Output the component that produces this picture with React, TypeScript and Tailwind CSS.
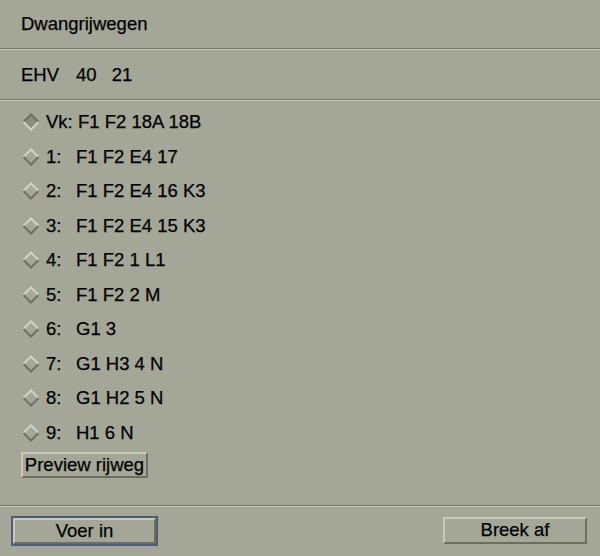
import React from "react";

// Motif-achtige dialoog: keuze van de dwangrijweg.

const ROUTES: Array<{ label: string; route: string }> = [
  { label: "Vk:", route: "F1 F2 18A 18B" },
  { label: "1:", route: "F1 F2 E4 17" },
  { label: "2:", route: "F1 F2 E4 16 K3" },
  { label: "3:", route: "F1 F2 E4 15 K3" },
  { label: "4:", route: "F1 F2 1 L1" },
  { label: "5:", route: "F1 F2 2 M" },
  { label: "6:", route: "G1 3" },
  { label: "7:", route: "G1 H3 4 N" },
  { label: "8:", route: "G1 H2 5 N" },
  { label: "9:", route: "H1 6 N" },
];

function Separator() {
  return <div className="h-[2px] border-t border-t-[#76786c] border-b border-b-[#c6c7ba]" />;
}

function Diamond({ on }: { on: boolean }) {
  const top = on ? "#6e7064" : "#d2d3c7";
  const bottom = on ? "#d2d3c7" : "#6e7064";
  return (
    <svg width="18" height="18" viewBox="0 0 18 18" className="shrink-0">
      <polygon points="9,1 17,9 9,17 1,9" fill={on ? "#8a8c7e" : "none"} />
      <polyline points="1.5,9 9,1.5 16.5,9" fill="none" stroke={top} strokeWidth="2" />
      <polyline points="1.5,9 9,16.5 16.5,9" fill="none" stroke={bottom} strokeWidth="2" />
    </svg>
  );
}

function RaisedButton({ children, className = "" }: { children: React.ReactNode; className?: string }) {
  return (
    <button
      className={
        "flex items-center justify-center border-2 border-t-[#c9cabd] border-l-[#c9cabd] border-b-[#6c6e62] border-r-[#6c6e62] bg-[#a4a697] leading-none " +
        className
      }
    >
      {children}
    </button>
  );
}

export default function App() {
  const [sel, setSel] = React.useState(0);
  return (
    <div className="flex h-[556px] w-[600px] flex-col bg-[#a4a697] font-['Liberation_Sans',Arial,sans-serif] text-[18.5px] text-black [-webkit-text-stroke:0.25px_black]">
      <div className="flex h-[48px] items-center pl-[21px]">Dwangrijwegen</div>
      <Separator />
      <div className="flex h-[49px] items-center pl-[21px]">
        <span>EHV</span>
        <span className="ml-[17px]">40</span>
        <span className="ml-[15px]">21</span>
      </div>
      <Separator />
      <ul className="pt-[4px]">
        {ROUTES.map((r, i) => (
          <li
            key={r.label}
            className="flex h-[34.5px] cursor-default items-center pl-[22px]"
            onClick={() => setSel(i)}
          >
            <Diamond on={sel === i} />
            <span className="ml-[6px] w-[30px]">{r.label}</span>
            <span className={i === 0 ? "ml-[2px]" : ""}>{r.route}</span>
          </li>
        ))}
      </ul>
      <div className="pl-[21px] pt-[2px]">
        <RaisedButton className="h-[26px] w-[127px]">Preview rijweg</RaisedButton>
      </div>
      <div className="flex-1" />
      <Separator />
      <div className="flex h-[49px] items-start justify-between pl-[11px] pr-[13px] pt-[9px]">
        <div className="border-2 border-[#4e5d73]">
          <RaisedButton className="h-[26px] w-[143px]">Voer in</RaisedButton>
        </div>
        <RaisedButton className="mt-[1px] h-[27px] w-[144px]">Breek af</RaisedButton>
      </div>
    </div>
  );
}
